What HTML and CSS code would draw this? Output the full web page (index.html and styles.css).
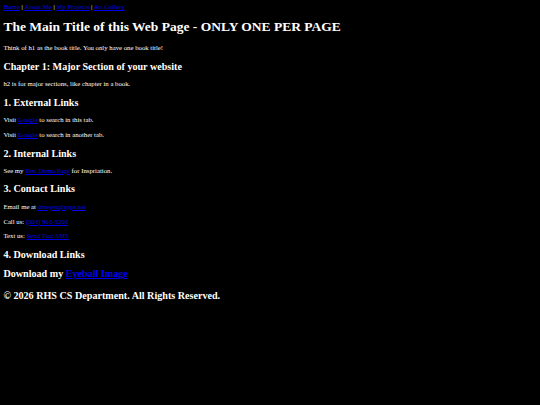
FILE: index.html
```html
<!DOCTYPE html>
<html>
<head>
<meta charset="utf-8">
<title>RHS CS</title>
<link rel="stylesheet" href="styles.css">
</head>
<body class="page">
<nav class="nav"><a href="#">Home</a> | <a href="#">About Me</a> | <a href="#">My Projects</a> | <a href="#">Art Gallery</a></nav>
<h1>The Main Title of this Web Page - ONLY ONE PER PAGE</h1>
<p>Think of h1 as the book title. You only have one book title!</p>
<h2>Chapter 1: Major Section of your website</h2>
<p>h2 is for major sections, like chapter in a book.</p>
<h2>1. External Links</h2>
<p>Visit <a href="#">Google</a> to search in this tab.</p>
<p>Visit <a href="#">Google</a> to search in another tab.</p>
<h2>2. Internal Links</h2>
<p>See my <a href="#">Text Demo Page</a> for Inspriation.</p>
<h2>3. Contact Links</h2>
<p>Email me at <a href="#">dmeyer@rpps.net</a></p>
<p>Call us: <a href="#">(503) 916-5200</a></p>
<p>Text us: <a href="#">Send Text SMS</a></p>
<h2>4. Download Links</h2>
<h2 class="download">Download my <a href="#">Eyeball Image</a></h2>
<footer class="footer"><h2>&copy; 2026 RHS CS Department. All Rights Reserved.</h2></footer>
</body>
</html>
```
FILE: styles.css
```css
html {
  background: #000;
}
.page {
  margin: 3.375px;
  font-family: "Liberation Serif", "Times New Roman", serif;
  font-size: 6.75px;
  background: #000;
  color: #fff;
}
.page p {
  line-height: 8.1px;
}
.page a {
  color: #0000ee;
}
.footer h2 {
  margin-top: 11px;
}
```
